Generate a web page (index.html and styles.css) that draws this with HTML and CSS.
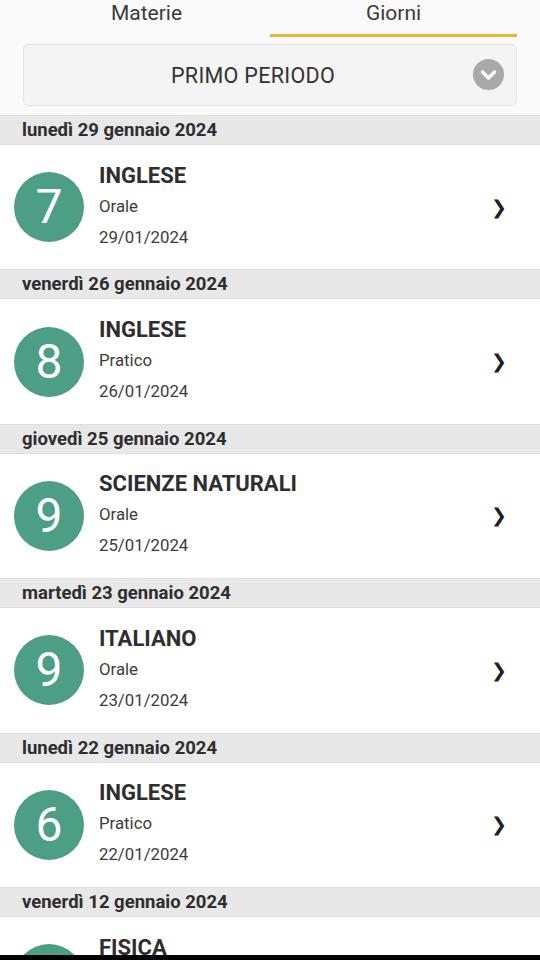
FILE: index.html
```html
<!DOCTYPE html>
<html lang="it">

<head>
    <meta charset="UTF-8">
    <meta name="viewport" content="width=device-width, initial-scale=1.0">
    <title>Voti</title>
    <link rel="stylesheet" href="styles.css">
</head>

<body>
    <div class="top">
        <div class="tabs">
            <div class="tab">Materie</div>
            <div class="tab active">Giorni</div>
        </div>
        <div class="period">
            <span class="period-name">PRIMO PERIODO</span>
            <span class="period-btn">
                <svg width="31" height="31" viewBox="0 0 31 31">
                    <circle cx="15.5" cy="15.5" r="15.5" fill="#a9a9a9" />
                    <path d="M9.5 13 L15.5 19 L21.5 13" fill="none" stroke="#fff" stroke-width="3.4" stroke-linecap="round" stroke-linejoin="round" />
                </svg>
            </span>
        </div>
    </div>

    <ul class="grades">
        <li class="day">lunedì 29 gennaio 2024</li>
        <li class="grade">
            <div class="mark">7</div>
            <div class="info">
                <div class="subject">INGLESE</div>
                <div class="type">Orale</div>
                <div class="date">29/01/2024</div>
            </div>
            <div class="arrow">&#10095;</div>
        </li>
        <li class="day">venerdì 26 gennaio 2024</li>
        <li class="grade">
            <div class="mark">8</div>
            <div class="info">
                <div class="subject">INGLESE</div>
                <div class="type">Pratico</div>
                <div class="date">26/01/2024</div>
            </div>
            <div class="arrow">&#10095;</div>
        </li>
        <li class="day">giovedì 25 gennaio 2024</li>
        <li class="grade">
            <div class="mark">9</div>
            <div class="info">
                <div class="subject">SCIENZE NATURALI</div>
                <div class="type">Orale</div>
                <div class="date">25/01/2024</div>
            </div>
            <div class="arrow">&#10095;</div>
        </li>
        <li class="day">martedì 23 gennaio 2024</li>
        <li class="grade">
            <div class="mark">9</div>
            <div class="info">
                <div class="subject">ITALIANO</div>
                <div class="type">Orale</div>
                <div class="date">23/01/2024</div>
            </div>
            <div class="arrow">&#10095;</div>
        </li>
        <li class="day">lunedì 22 gennaio 2024</li>
        <li class="grade">
            <div class="mark">6</div>
            <div class="info">
                <div class="subject">INGLESE</div>
                <div class="type">Pratico</div>
                <div class="date">22/01/2024</div>
            </div>
            <div class="arrow">&#10095;</div>
        </li>
        <li class="day">venerdì 12 gennaio 2024</li>
        <li class="grade">
            <div class="mark">7</div>
            <div class="info">
                <div class="subject">FISICA</div>
                <div class="type">Scritto</div>
                <div class="date">12/01/2024</div>
            </div>
            <div class="arrow">&#10095;</div>
        </li>
    </ul>

    <div class="navbar"></div>
</body>

</html>
```

FILE: styles.css
```css
body {
    font-family: Roboto, "Noto Sans", Arial, sans-serif;
    background-color: #fff;
    color: #333;
    margin: 0;
    padding: 0;
    height: 960px;
    overflow: hidden;
    position: relative;
}

.top {
    background-color: #fafafa;
    padding: 0 23px 9px;
}

.tabs {
    display: flex;
    height: 37px;
}

.tab {
    flex: 1;
    text-align: center;
    font-size: 21px;
    line-height: 27px;
    color: #3a3a3a;
    box-sizing: border-box;
}

.tab.active {
    border-bottom: 3px solid #e8b53d;
    height: 37px;
}

.period {
    margin-top: 7px;
    height: 62px;
    box-sizing: border-box;
    border: 1px solid #e6e6e6;
    border-radius: 5px;
    background-color: #f4f4f4;
    display: flex;
    align-items: center;
    justify-content: center;
    position: relative;
}

.period-name {
    font-size: 21.5px;
    color: #333;
    margin-left: -34px;
    letter-spacing: 0.3px;
}

.period-btn {
    position: absolute;
    right: 12px;
    top: 14px;
    height: 31px;
}

.grades {
    list-style-type: none;
    margin: 0;
    padding: 0;
}

.day {
    height: 30px;
    box-sizing: border-box;
    background-color: #e8e8e8;
    border-top: 1px solid #dedede;
    border-bottom: 1px solid #dedede;
    padding-left: 22px;
    font-size: 18.5px;
    font-weight: bold;
    line-height: 28px;
    color: #2e2e2e;
}

.grade {
    height: 124.4px;
    display: flex;
    align-items: center;
    padding: 0 33px 0 14px;
}

.mark {
    width: 70px;
    height: 70px;
    border-radius: 50%;
    background-color: #4c9e85;
    color: #fff;
    font-size: 48px;
    line-height: 70px;
    text-align: center;
    flex-shrink: 0;
}

.info {
    flex-grow: 1;
    margin-left: 15px;
    margin-top: -1px;
}

.subject {
    font-size: 22px;
    font-weight: bold;
    line-height: 30px;
    color: #2e2e2e;
}

.type,
.date {
    font-size: 16.8px;
    line-height: 31px;
    color: #3c3c3c;
}

.arrow {
    font-size: 19px;
    color: #222;
}

.navbar {
    position: absolute;
    left: 0;
    right: 0;
    bottom: 0;
    height: 5px;
    background-color: #000;
}
```
